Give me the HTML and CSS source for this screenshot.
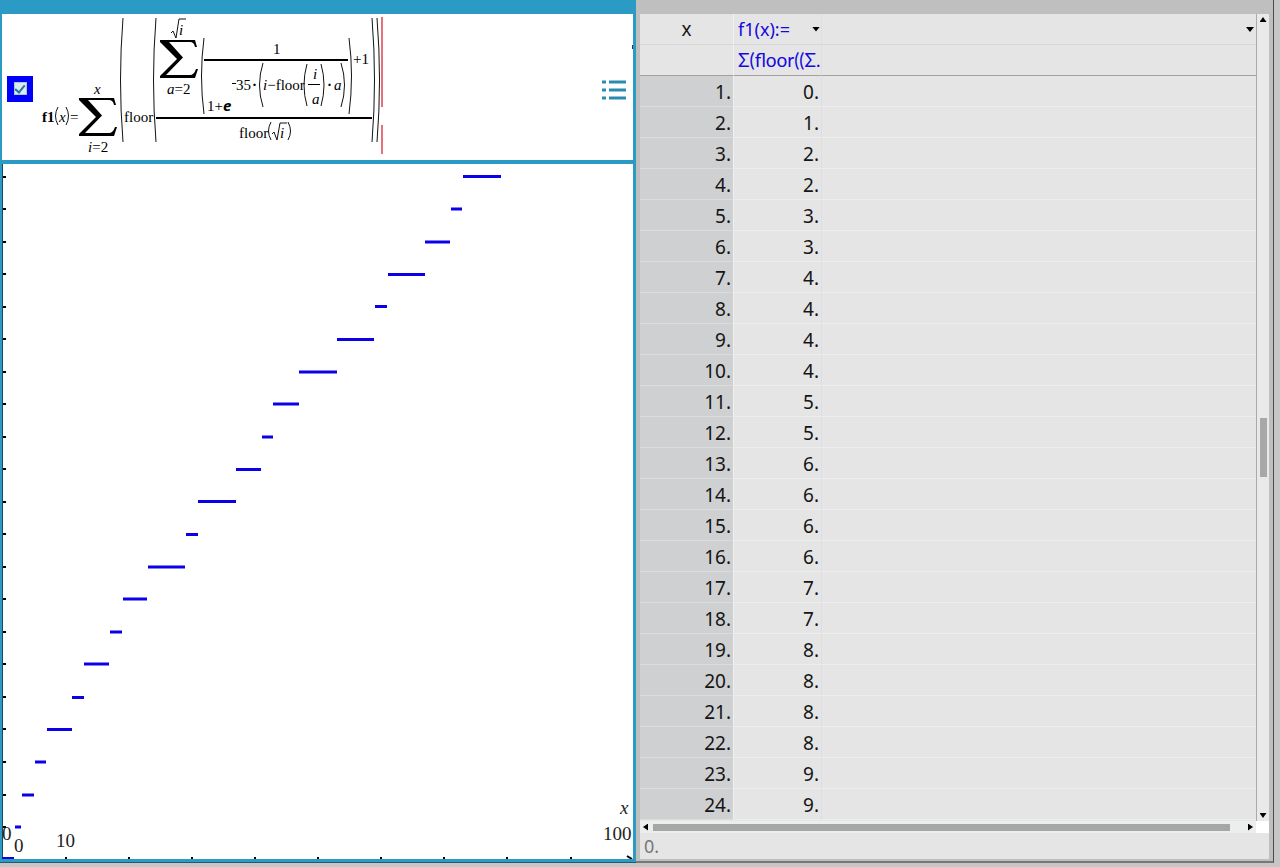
FILE: index.html
```
<!DOCTYPE html>
<html lang="en">
<head>
<meta charset="utf-8">
<title>Graph and table</title>
<link rel="stylesheet" href="styles.css">
</head>
<body>
<main class="workspace">
  <section class="graph-pane" aria-label="Graph">
    <div class="entry">
      <label class="toggle"><input type="checkbox" checked aria-label="Show f1"></label>
      <svg class="formula" width="346" height="146" viewBox="40 14 346 146" role="img" aria-label="Definition of f1(x)">
        <defs>
          <path id="sigma" d="M0 0H35L37 7H35Q34 2 30 2H9L23 17.500L6 35H30Q34 35 36 29H38L35 38H0V36L17 19L0 2Z"/>
        </defs>
        <g class="math">
          <text x="42" y="122" class="bold">f1</text>
          <text x="59" y="122" class="var">x</text>
          <text x="70" y="122">=</text>
          <text x="94" y="94" class="var">x</text>
          <text x="88" y="152"><tspan class="var">i</tspan>=2</text>
          <text x="124" y="122">floor</text>
          <text x="179" y="35" class="var">i</text>
          <text x="167" y="94"><tspan class="var">a</tspan>=2</text>
          <text x="273" y="54">1</text>
          <text x="207" y="111">1+<tspan class="exp">e</tspan></text>
          <text x="236" y="90">35</text>
          <text x="252" y="90" class="bold">·</text>
          <text x="263" y="90"><tspan class="var">i</tspan>−floor</text>
          <text x="313" y="79" class="var">i</text>
          <text x="312" y="104" class="var">a</text>
          <text x="327" y="90" class="bold">·</text>
          <text x="334" y="90" class="var">a</text>
          <text x="353" y="64">+1</text>
          <text x="239" y="138">floor</text>
          <text x="280" y="138" class="var">i</text>
        </g>
        <use href="#sigma" x="79" y="98"/>
        <use href="#sigma" x="160" y="40"/>
        <g class="bars">
          <path d="M156 118H372"/>
          <path d="M204 60H348"/>
          <path d="M308 84.500H320" class="thin-bar"/>
          <path d="M232 83.500H236" class="thin-bar"/>
        </g>
        <g class="parens">
          <path d="M58 107Q53 116 58 125M66 107Q71 116 66 125"/>
          <path d="M123 18Q118 80 123 142M156 18Q151 80 156 142"/>
          <path d="M204 38Q199 76 204 114M349 38Q354 76 349 114"/>
          <path d="M263 63Q256 85 263 107M341 63Q348 85 341 107"/>
          <path d="M307 64Q301 85 307 106M321 64Q327 85 321 106"/>
          <path d="M271 122Q266 131 271 140M288 122Q293 131 288 140"/>
          <path d="M372 18Q377 80 372 142M377 18Q382 80 377 142"/>
          <path d="M171 33L173 31L176 38L179 19H186"/>
          <path d="M272 134L274 132L277 140L280 123H287"/>
        </g>
        <path class="cursor" d="M382 17V107M382 125V154"/>
      </svg>
      <button class="menu" type="button" aria-label="Entry list">
        <svg width="24" height="20" viewBox="0 0 24 20"><path d="M0 2H4M0 10H4M0 18H4M7 2H24M7 10H24M7 18H24"/></svg>
      </button>
    </div>
    <svg class="plot" viewBox="2 164 631 695" preserveAspectRatio="xMinYMax meet" role="img" aria-label="Step plot of f1">
      <path class="axis" d="M2.500 164V859"/>
      <path class="ticks" d="M3 827H6M3 795H6M3 762H6M3 729H6M3 697H6M3 664H6M3 632H6M3 599H6M3 567H6M3 534H6M3 502H6M3 469H6M3 437H6M3 404H6M3 372H6M3 339H6M3 307H6M3 274H6M3 242H6M3 209H6M3 177H6M66 857V859M129 857V859M192 857V859M255 857V859M318 857V859M381 857V859M444 857V859M507 857V859M571 857V859M627 856L632 859"/>
      <path class="steps" d="M2 858.500H14M15 827H21M22 795H34M35 762H46M47 729.500H72M72 697.500H84M84 664H109M110 632H122M123 599H147M148 567H185M186 534.500H198M198 501.500H236M236 469.500H261M262 437H273M273 404H299M299 372H337M337 339.500H374M375 306.500H387M388 274.500H425M425 242H450M451 209H462M463 176.500H501"/>
      <g class="labels">
        <text x="2" y="840">0</text>
        <text x="14" y="852">0</text>
        <text x="56" y="847">10</text>
        <text x="603" y="840">100</text>
        <text x="620" y="814" class="var">x</text>
      </g>
    </svg>
  </section>

  <section class="table-pane" aria-label="Table">
    <div class="sheet">
      <div class="grid-area">
        <table class="values">
          <colgroup><col class="col-x"><col class="col-f"><col></colgroup>
          <thead>
            <tr class="head-name"><th class="x-head">x</th><th class="fn"><div class="fn-name">f1(x):=<button type="button" class="drop" aria-label="Choose function"></button></div></th><th><button type="button" class="drop last" aria-label="Choose function for next column"></button></th></tr>
            <tr class="head-def"><th class="x-foot"></th><th class="fn"><div class="definition">Σ(floor((Σ.</div></th><th></th></tr>
          </thead>
          <tbody>
            <tr><th>1.</th><td>0.</td><td></td></tr>
            <tr><th>2.</th><td>1.</td><td></td></tr>
            <tr><th>3.</th><td>2.</td><td></td></tr>
            <tr><th>4.</th><td>2.</td><td></td></tr>
            <tr><th>5.</th><td>3.</td><td></td></tr>
            <tr><th>6.</th><td>3.</td><td></td></tr>
            <tr><th>7.</th><td>4.</td><td></td></tr>
            <tr><th>8.</th><td>4.</td><td></td></tr>
            <tr><th>9.</th><td>4.</td><td></td></tr>
            <tr><th>10.</th><td>4.</td><td></td></tr>
            <tr><th>11.</th><td>5.</td><td></td></tr>
            <tr><th>12.</th><td>5.</td><td></td></tr>
            <tr><th>13.</th><td>6.</td><td></td></tr>
            <tr><th>14.</th><td>6.</td><td></td></tr>
            <tr><th>15.</th><td>6.</td><td></td></tr>
            <tr><th>16.</th><td>6.</td><td></td></tr>
            <tr><th>17.</th><td>7.</td><td></td></tr>
            <tr><th>18.</th><td>7.</td><td></td></tr>
            <tr><th>19.</th><td>8.</td><td></td></tr>
            <tr><th>20.</th><td>8.</td><td></td></tr>
            <tr><th>21.</th><td>8.</td><td></td></tr>
            <tr><th>22.</th><td>8.</td><td></td></tr>
            <tr><th>23.</th><td>9.</td><td></td></tr>
            <tr><th>24.</th><td>9.</td><td></td></tr>
          </tbody>
        </table>
      </div>
      <div class="vbar">
        <button type="button" class="arrow up" aria-label="Scroll up"></button>
        <div class="vtrack"><div class="thumb"></div></div>
        <button type="button" class="arrow down" aria-label="Scroll down"></button>
      </div>
      <div class="hbar">
        <button type="button" class="arrow left" aria-label="Scroll left"></button>
        <div class="htrack"><div class="thumb"></div></div>
        <button type="button" class="arrow right" aria-label="Scroll right"></button>
      </div>
      <div class="corner"></div>
      <input class="cell-value" type="text" value="0." readonly aria-label="Cell value">
    </div>
  </section>
</main>
</body>
</html>
```
FILE: styles.css
```
* { box-sizing: border-box; }
body {
  margin: 0;
  background: #c6c6c6;
  font-family: "Noto Sans", "Open Sans", sans-serif;
}
button { border: 0; padding: 0; background: none; }
.workspace {
  display: grid;
  grid-template-columns: 636fr 638fr;
  height: 100vh;
  padding: 0 6px 4px 0;
}

/* Graph */
.graph-pane {
  display: flex;
  flex-direction: column;
  min-width: 0;
  min-height: 0;
  padding: 14px 3px 3px 2px;
  background: #2b9bc6;
  border-bottom: 1px solid #28586e;
}
.entry {
  position: relative;
  display: flex;
  align-items: center;
  flex: none;
  height: 146px;
  margin-bottom: 4px;
  padding: 0 6px 0 5px;
  background: #fff;
}
.entry::after {
  content: "";
  position: absolute;
  right: 0;
  top: 31px;
  width: 1px;
  height: 4px;
  background: #173b63;
}
.toggle {
  display: grid;
  place-items: center;
  width: 26px;
  height: 26px;
  margin: 3px 7px 0 0;
  background: #0000fa;
}
.toggle input {
  appearance: none;
  width: 13px;
  height: 13px;
  margin: 0;
  display: grid;
  place-items: center;
  background: #dcebf2;
  border: 1px solid #a9c9d8;
}
.toggle input:checked::before {
  content: "";
  width: 4px;
  height: 8px;
  margin-bottom: 2px;
  border: solid #23779c;
  border-width: 0 2px 2px 0;
  transform: rotate(40deg);
}
.formula { flex: none; }
.math { font: 15px "Liberation Serif", serif; }
.var { font-style: italic; }
.bold { font-weight: bold; }
.exp { font: italic bold 15px "Open Sans", sans-serif; }
.bars { stroke: #000; stroke-width: 2; }
.bars .thin-bar { stroke-width: 1; }
.parens { fill: none; stroke: #111; stroke-width: 1; }
.cursor { stroke: #e8707a; stroke-width: 2; }
.menu { display: flex; margin: 6px 1px 0 auto; }
.menu path { stroke: #2b8ab0; stroke-width: 3; }
.plot {
  display: block;
  flex: 1;
  min-height: 0;
  width: 100%;
  background: #fff;
}
.axis { stroke: #174d63; }
.ticks { stroke: #000; stroke-width: 2; fill: none; }
.steps { stroke: #0b00e6; stroke-width: 3; }
.labels { font: 19px "Liberation Serif", serif; fill: #222; }

/* Table */
.table-pane {
  display: flex;
  min-width: 0;
  min-height: 0;
  padding: 14px 4px 2px 4px;
  background: #bfbfbf;
  border-right: 1px solid #4a4a4a;
  border-bottom: 2px solid #777;
}
.sheet {
  display: grid;
  flex: 1;
  min-width: 0;
  grid-template-columns: 1fr 13px;
  grid-template-rows: 1fr 12px 26px;
  background: #e5e5e5;
}
.grid-area { overflow: hidden; min-height: 0; }
.values {
  width: 100%;
  table-layout: fixed;
  border-collapse: separate;
  border-spacing: 0;
  font-size: 19px;
  line-height: 28px;
  color: #151515;
}
.col-x { width: 94px; }
.col-f { width: 88px; }
.values th, .values td {
  height: 31px;
  padding: 1px 2px 0 0;
  font-weight: normal;
  text-align: right;
  border-bottom: 1px solid #ededed;
}
.values td:nth-child(2) { border-right: 1px solid #dedede; }
.values tbody th {
  background: #cfd0d2;
  border-bottom-color: #dcdcdc;
  border-right: 1px solid #f0f0f0;
}
.values .head-name th { border-bottom: 1px solid #d8d8d8; }
.values .head-def th { border-bottom: 1px solid #a2a2a2; }
.values .x-head {
  padding: 0;
  text-align: center;
  border-bottom-color: transparent;
  border-right: 1px solid #f0f0f0;
}
.values .x-foot { border-right: 1px solid #f0f0f0; }
.values .fn {
  padding: 0 0 0 4px;
  text-align: left;
  font-size: 18px;
  color: #1508e0;
  border-right: 1px solid #dedede;
}
.fn-name { display: flex; align-items: center; justify-content: space-between; padding-right: 1px; }
.definition {
  white-space: nowrap;
  font-family: Lato, "Open Sans", sans-serif;
  font-size: 19px;
}
.drop {
  width: 8px;
  height: 5px;
  background: #000;
  clip-path: polygon(0 0, 100% 0, 50% 100%);
}
.last { display: block; margin-left: auto; }
.vbar {
  display: flex;
  flex-direction: column;
  align-items: center;
  padding: 3px 0;
  background: #e9e9e9;
  border-left: 1px solid #aaa;
}
.vtrack {
  display: grid;
  flex: 1;
  width: 7px;
  grid-template-rows: 500fr 75fr 425fr;
}
.vtrack .thumb { grid-row: 2; background: #a8a8a8; }
.hbar {
  display: flex;
  align-items: center;
  padding: 0 3px;
  background: #eceeed;
}
.htrack {
  display: grid;
  flex: 1;
  height: 7px;
  margin: 0 4px 0 5px;
  grid-template-columns: 578fr 14fr;
}
.htrack .thumb { background: #a5a6a6; }
.arrow { flex: none; background: #000; width: 7px; height: 5px; }
.up { clip-path: polygon(50% 0, 100% 100%, 0 100%); }
.down { clip-path: polygon(0 0, 100% 0, 50% 100%); }
.left, .right { width: 5px; height: 7px; }
.left { clip-path: polygon(100% 0, 100% 100%, 0 50%); }
.right { clip-path: polygon(0 0, 100% 50%, 0 100%); }
.corner { background: #fff; }
.cell-value {
  grid-column: 1 / -1;
  min-width: 0;
  border: 0;
  padding: 0 4px;
  background: #e5e5e5;
  color: #777;
  font: 18px "Noto Sans", sans-serif;
}
```
